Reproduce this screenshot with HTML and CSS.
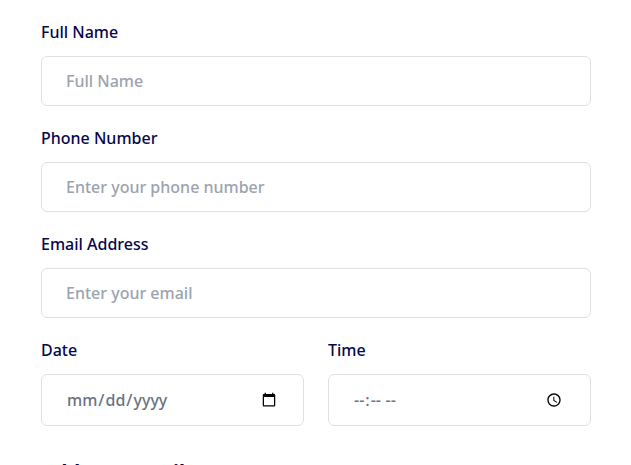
FILE: index.html
```html
<!DOCTYPE html>
<html lang="en">
<head>
<meta charset="utf-8">
<title>Appointment</title>
<link rel="stylesheet" href="styles.css">
</head>
<body>
<form class="form">
<div class="field"><label class="label" for="name">Full Name</label><input class="input" type="text" id="name" placeholder="Full Name"></div>
<div class="field"><label class="label" for="phone">Phone Number</label><input class="input" type="text" id="phone" placeholder="Enter your phone number"></div>
<div class="field"><label class="label" for="email">Email Address</label><input class="input" type="email" id="email" placeholder="Enter your email"></div>
<div class="row">
<div class="field"><label class="label" for="date">Date</label><input class="input" type="date" id="date"></div>
<div class="field"><label class="label" for="time">Time</label><input class="input" type="time" id="time"></div>
</div>
<h2 class="heading">Address Details</h2>
</form>
</body>
</html>
```
FILE: styles.css
```css
*{box-sizing:border-box}
html,body{margin:0;height:465px;overflow:hidden;background:#fff}
body{font-family:"Noto Sans",sans-serif}
.form{width:550px;margin:0 auto 0 41px;padding-top:20px}
.field{margin-bottom:20px}
.label{display:block;margin-bottom:12px;font-size:16px;line-height:24px;font-weight:500;color:#07074d}
.input{display:block;width:100%;padding:12px 24px;border:1px solid #e0e0e0;border-radius:6px;background:#fff;font:500 16px/24px "Noto Sans",sans-serif;color:#6b7280;outline:none}
.input::placeholder{color:#9ca3af;opacity:1}
.row{display:grid;grid-template-columns:1fr 1fr;column-gap:24px}
.heading{margin:12px 0 0;font-size:20px;line-height:28px;font-weight:700;color:#07074d}
```
